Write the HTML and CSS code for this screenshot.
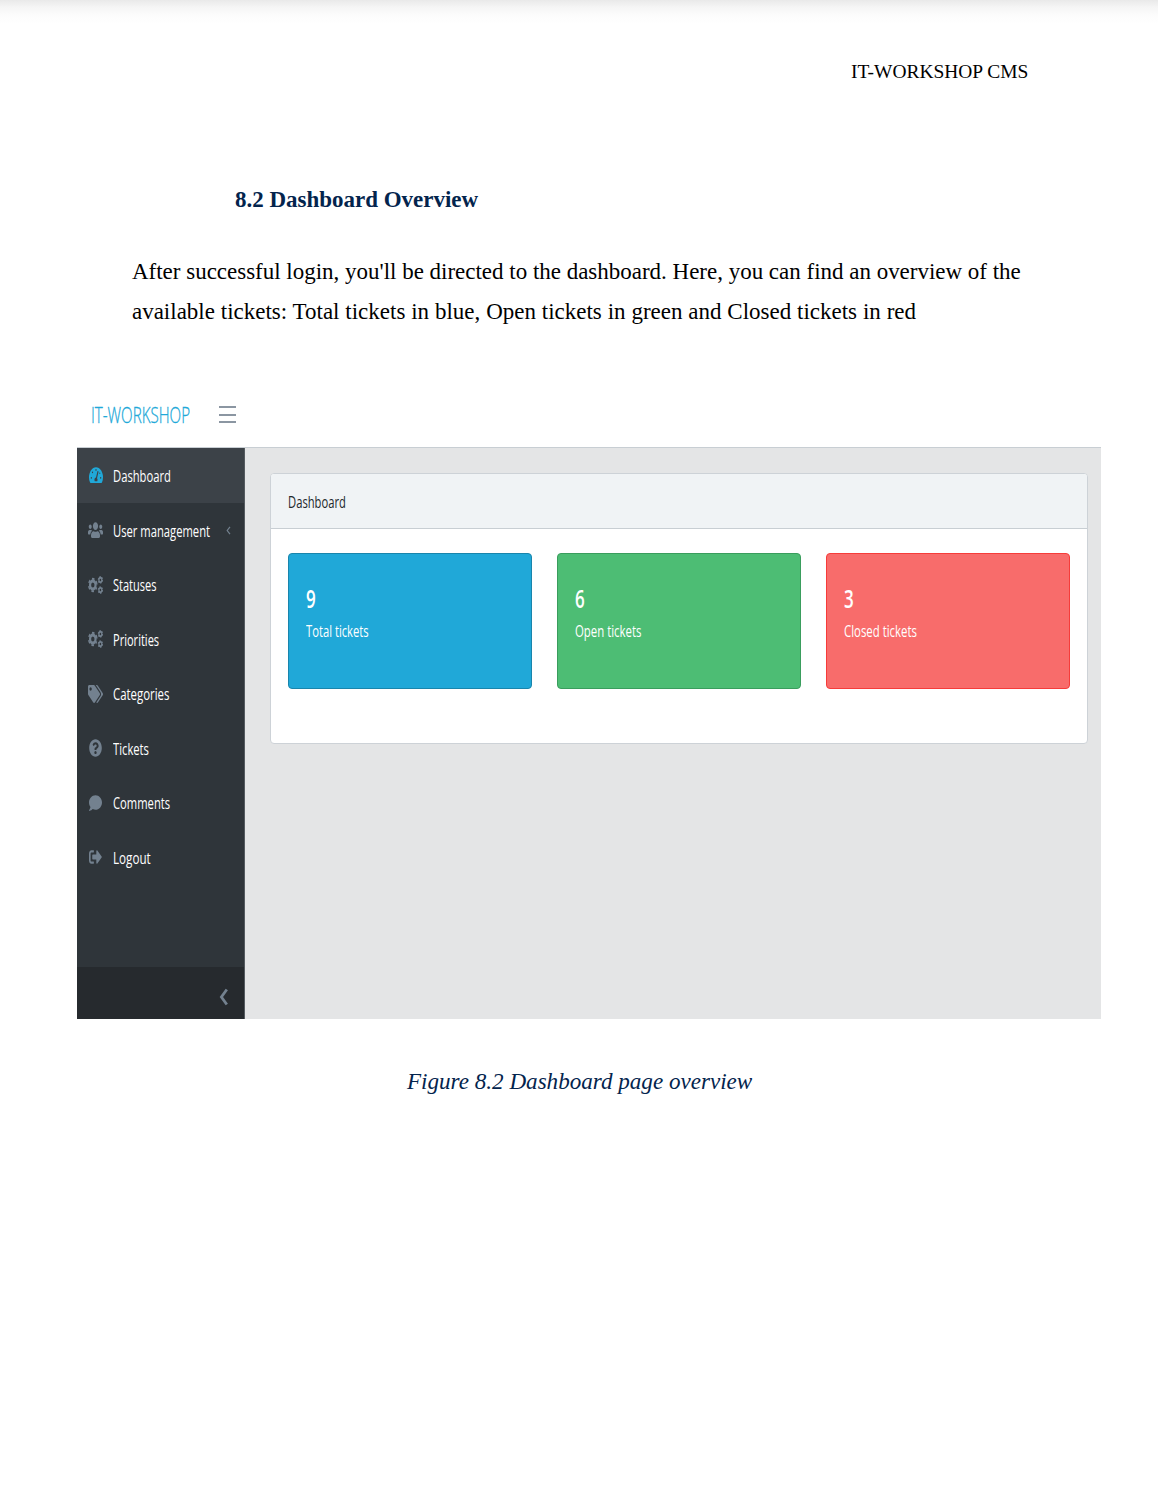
FILE: index.html
```html
<!DOCTYPE html>
<html lang="en">
<head>
<meta charset="utf-8">
<title>IT-WORKSHOP CMS</title>
<link rel="stylesheet" href="styles.css">
</head>
<body>
<svg class="defs" width="0" height="0" aria-hidden="true">
  <symbol id="cogs" viewBox="0 0 640 512" preserveAspectRatio="none">
    <g fill="none" stroke="currentColor">
      <circle cx="205" cy="256" r="118" stroke-width="92"/>
      <circle cx="205" cy="256" r="176" stroke-width="58" stroke-dasharray="100 84.300" stroke-dashoffset="50" transform="rotate(30 205 256)"/>
      <circle cx="528" cy="112" r="62" stroke-width="54"/>
      <circle cx="528" cy="112" r="92" stroke-width="36" stroke-dasharray="50 46.340"/>
      <circle cx="528" cy="400" r="62" stroke-width="54"/>
      <circle cx="528" cy="400" r="92" stroke-width="36" stroke-dasharray="50 46.340"/>
    </g>
  </symbol>
</svg>
<main class="page">
  <header class="doc-header">IT-WORKSHOP CMS</header>
  <h1 class="doc-title">8.2 Dashboard Overview</h1>
  <p class="doc-text">After successful login, you'll be directed to the dashboard. Here, you can find an overview of the<br><span class="last-line">available tickets: Total tickets in blue, Open tickets in green and Closed tickets in red</span></p>

  <section class="app">
    <div class="topbar">
      <span class="brand fit">IT-WORKSHOP</span>
      <span class="burger"><i></i><i></i><i></i></span>
    </div>
    <div class="app-body">
      <aside class="sidebar">
        <nav class="nav">
          <a class="item active">
            <svg class="icon narrow" viewBox="0 0 576 512" preserveAspectRatio="none"><path fill="currentColor" d="M288 32C129 32 0 161 0 320c0 53 14 102 39 145 6 10 16 15 28 15h442c12 0 22-5 28-15 25-43 39-92 39-145C576 161 447 32 288 32z"/><g fill="#3c4248"><circle cx="288" cy="112" r="26"/><circle cx="144" cy="180" r="26"/><circle cx="96" cy="336" r="26"/><circle cx="480" cy="336" r="26"/><circle cx="445" cy="205" r="22"/><path d="M350 140l45 15-64 190c13 12 21 28 21 47 0 16-5 28-13 40H237c-8-12-13-24-13-40 0-34 28-64 64-64z"/></g></svg>
            <span class="label fit">Dashboard</span>
          </a>
          <a class="item">
            <svg class="icon wide" viewBox="0 0 640 512" preserveAspectRatio="none"><path fill="currentColor" d="M96 224c35.300 0 64-28.700 64-64s-28.700-64-64-64-64 28.700-64 64 28.700 64 64 64zm448 0c35.300 0 64-28.700 64-64s-28.700-64-64-64-64 28.700-64 64 28.700 64 64 64zm32 32h-64c-17.600 0-33.500 7.100-45.100 18.600 40.300 22.100 68.900 62 75.100 109.400h66c17.700 0 32-14.300 32-32v-32c0-35.300-28.700-64-64-64zm-256 0c61.900 0 112-50.100 112-112S381.900 32 320 32 208 82.100 208 144s50.100 112 112 112zm76.800 32h-8.300c-20.800 10-43.900 16-68.500 16s-47.600-6-68.500-16h-8.300C179.600 288 128 339.600 128 403.200V432c0 26.500 21.500 48 48 48h288c26.500 0 48-21.500 48-48v-28.800c0-63.600-51.600-115.200-115.200-115.200zm-223.700-13.400C161.500 263.100 145.600 256 128 256H64c-35.300 0-64 28.700-64 64v32c0 17.700 14.300 32 32 32h65.900c6.300-47.400 34.900-87.300 75.200-109.400z"/></svg>
            <span class="label fit">User management</span>
            <svg class="caret" viewBox="0 0 5 9"><path d="M4 .8L1.200 4.500L4 8.200" fill="none" stroke="currentColor" stroke-width="1.200"/></svg>
          </a>
          <a class="item">
            <svg class="icon wide"><use href="#cogs"/></svg>
            <span class="label fit statuses">Statuses</span>
          </a>
          <a class="item">
            <svg class="icon wide"><use href="#cogs"/></svg>
            <span class="label fit priorities">Priorities</span>
          </a>
          <a class="item">
            <svg class="icon wide" viewBox="0 0 640 512" preserveAspectRatio="none"><path fill="currentColor" d="M497.941 225.941L286.059 14.059A48 48 0 0 0 252.118 0H48C21.490 0 0 21.490 0 48v204.118a48 48 0 0 0 14.059 33.941l211.882 211.882c18.744 18.745 49.136 18.746 67.882 0l204.118-204.118c18.745-18.745 18.745-49.137 0-67.882zM112 160c-26.510 0-48-21.490-48-48s21.490-48 48-48 48 21.490 48 48-21.490 48-48 48zm513.941 133.823L421.823 497.941c-18.745 18.745-49.137 18.745-67.882 0l-.36-.36L527.640 323.522c16.999-16.999 26.360-39.600 26.360-63.640s-9.362-46.641-26.360-63.640L331.397 0h48.721a48 48 0 0 1 33.941 14.059l211.882 211.882c18.745 18.745 18.745 49.137 0 67.882z"/></svg>
            <span class="label fit categories">Categories</span>
          </a>
          <a class="item">
            <svg class="icon" viewBox="0 0 512 512" preserveAspectRatio="none"><path fill="currentColor" d="M504 256c0 136.997-111.043 248-248 248S8 392.997 8 256C8 119.083 119.043 8 256 8s248 111.083 248 248zM262.655 90c-54.497 0-89.255 22.957-116.549 63.758-3.536 5.286-2.353 12.415 2.715 16.258l34.699 26.310c5.205 3.947 12.621 3.008 16.665-2.122 17.864-22.658 30.113-35.797 57.303-35.797 20.429 0 45.698 13.148 45.698 32.958 0 14.976-12.363 22.667-32.534 33.976C247.128 238.528 216 254.941 216 296v4c0 6.627 5.373 12 12 12h56c6.627 0 12-5.373 12-12v-1.333c0-28.462 83.186-29.647 83.186-106.667 0-58.002-60.165-102-116.531-102zM256 338c-25.365 0-46 20.635-46 46 0 25.364 20.635 46 46 46s46-20.636 46-46c0-25.365-20.635-46-46-46z"/></svg>
            <span class="label fit">Tickets</span>
          </a>
          <a class="item">
            <svg class="icon" viewBox="0 0 512 512" preserveAspectRatio="none"><path fill="currentColor" d="M256 32C114.600 32 0 125.100 0 240c0 49.600 21.400 95 57 130.700C44.500 421.100 2.700 466 2.200 466.500c-2.200 2.300-2.800 5.700-1.500 8.700S4.800 480 8 480c66.300 0 116-31.800 140.600-51.400 32.700 12.300 69 19.400 107.400 19.400 141.400 0 256-93.100 256-208S397.400 32 256 32z"/></svg>
            <span class="label fit">Comments</span>
          </a>
          <a class="item">
            <svg class="icon" viewBox="0 0 512 512" preserveAspectRatio="none"><path fill="currentColor" d="M497 273L329 441c-15 15-41 4.500-41-17v-96H152c-13.300 0-24-10.700-24-24v-96c0-13.300 10.700-24 24-24h136V88c0-21.400 25.900-32 41-17l168 168c9.300 9.400 9.300 24.600 0 34zM192 436v-40c0-6.600-5.400-12-12-12H96c-17.700 0-32-14.300-32-32V160c0-17.700 14.300-32 32-32h84c6.600 0 12-5.400 12-12V76c0-6.600-5.400-12-12-12H96c-53 0-96 43-96 96v192c0 53 43 96 96 96h84c6.600 0 12-5.400 12-12z"/></svg>
            <span class="label fit logout">Logout</span>
          </a>
        </nav>
        <div class="minimizer">
          <svg width="10" height="18" viewBox="0 0 10 18"><path d="M7.800 1.500L2.400 9L7.800 16.500" fill="none" stroke="currentColor" stroke-width="2.800"/></svg>
        </div>
      </aside>
      <div class="content">
        <div class="card">
          <div class="card-header"><span class="fit">Dashboard</span></div>
          <div class="card-body">
            <div class="stat blue"><strong class="fit">9</strong><span class="fit">Total tickets</span></div>
            <div class="stat green"><strong class="fit">6</strong><span class="fit open">Open tickets</span></div>
            <div class="stat red"><strong class="fit">3</strong><span class="fit closed">Closed tickets</span></div>
          </div>
        </div>
      </div>
    </div>
  </section>
  <p class="caption">Figure 8.2 Dashboard page overview</p>
</main>
</body>
</html>
```
FILE: styles.css
```css
* { box-sizing: border-box; }
body { margin: 0; background: #fff; color: #000; font-family: "Liberation Serif", "Times New Roman", serif; }
.defs { display: block; }
.page {
  height: 1503px;
  overflow: hidden;
  display: flex;
  flex-direction: column;
  align-items: flex-start;
  background: linear-gradient(#e9e9e9 0, #f5f5f5 7px, #fcfcfc 15px, #fff 24px);
}
.doc-header { margin: 60px 0 0 851px; font-size: 19.450px; line-height: 24px; white-space: nowrap; }
.doc-title { margin: 102px 0 0 235px; font-size: 22.980px; line-height: 28px; color: #03244d; white-space: nowrap; }
.doc-text { margin: 38px 0 0 132px; font-size: 22.970px; line-height: 40px; white-space: nowrap; }
.last-line { word-spacing: .15px; }

/* The application frame is condensed horizontally, so its labels are too. */
.app {
  width: 1024px;
  height: 635px;
  margin: 52px 0 0 77px;
  display: flex;
  flex-direction: column;
  font-family: "Open Sans", "Noto Sans", sans-serif;
  font-size: 16.500px;
  line-height: 25px;
  color: #23282c;
}
.fit { display: block; white-space: nowrap; transform: scaleX(var(--fit, .68)); transform-origin: left center; }
.topbar { height: 64px; display: flex; align-items: center; padding: 0 0 2px 14px; border-bottom: 1px solid #c8ced3; background: #fff; }
.brand { width: 128px; font-size: 22px; font-weight: 300; color: #20a8d8; -webkit-text-stroke: .3px #20a8d8; --fit: .688; }
.burger { width: 17px; display: flex; flex-direction: column; gap: 5.500px; }
.burger i { height: 2px; background: #8b96a2; }
.app-body { flex: 1; display: flex; min-height: 0; }
.sidebar { width: 168px; display: flex; flex-direction: column; background: #2f353a; border-right: 1px solid #555b60; color: #fff; }
.nav { flex: 1; }
.item { height: 54.500px; display: flex; align-items: center; padding: 1px 0 0 8px; color: #73818f; }
.item.active { padding-top: 0; background: #3c4248; color: #20a8d8; }
.icon { width: 13px; height: 18px; margin: 0 5px 0 4px; flex: none; }
.icon.wide { width: 15px; margin: 0 4px 0 3px; }
.icon.narrow { width: 14px; margin: 0 4.500px 0 3.500px; }
.label { width: 114px; margin-left: 6px; color: #fff; flex: none; }
.statuses { --fit: .667; }
.priorities { --fit: .67; }
.categories { --fit: .69; }
.logout { --fit: .705; }
.caret { width: 5px; height: 9px; margin-left: -1px; }
.minimizer { height: 52px; padding: 7px 15px 0 0; display: flex; align-items: center; justify-content: flex-end; background: #262a2e; color: #73818f; }
.content { flex: 1; padding: 25px 13px 0 25px; background: #e4e5e6; }
.card { height: 270.500px; border: 1px solid #cdd2d7; border-radius: 4px; background: #fff; overflow: hidden; }
.card-header { height: 55px; padding: 15px 17px 0; background: #f0f3f5; border-bottom: 1px solid #c8ced3; }
.card-body { display: grid; grid-template-columns: repeat(3, 244px); gap: 25px; padding: 24px 17px; }
.stat { height: 136px; padding: 28px 17px; border: 1px solid; border-radius: 4px; color: #fff; }
.stat strong { margin-bottom: 4px; font-size: 25px; font-weight: 600; line-height: 32px; }
.open { --fit: .69; }
.closed { --fit: .69; }
.blue { background: #20a8d8; border-color: #1985ac; }
.green { background: #4dbd74; border-color: #3a9d5d; }
.red { background: #f86c6b; border-color: #f63c3a; }
.caption { margin: 48px 0 0 407px; font-size: 23.100px; line-height: 28px; font-style: italic; color: #03244d; white-space: nowrap; }
```
